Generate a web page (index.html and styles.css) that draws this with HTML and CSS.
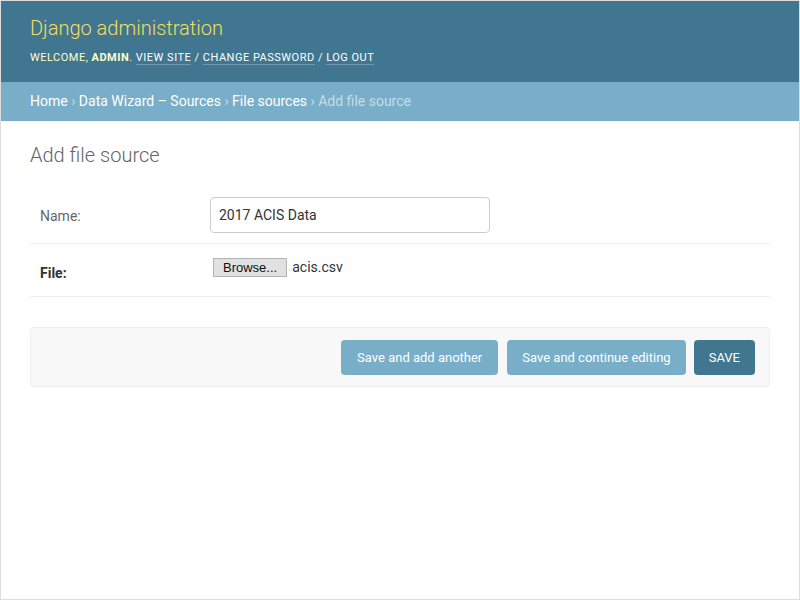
FILE: index.html
```html
<!DOCTYPE html>
<html lang="en">
<head>
<meta charset="utf-8">
<title>Add file source | Django site admin</title>
<link rel="stylesheet" href="styles.css">
</head>
<body>
<div class="page">
  <header class="header">
    <h1 class="site-name">Django administration</h1>
    <div class="user-tools">Welcome, <strong>admin</strong>. <a href="#">View site</a> / <a href="#">Change password</a> / <a href="#">Log out</a></div>
  </header>
  <nav class="breadcrumbs"><a href="#">Home</a> › <a href="#">Data Wizard – Sources</a> › <a href="#">File sources</a> › Add file source</nav>
  <main class="content">
    <h1 class="page-title">Add file source</h1>
    <form class="change-form">
      <div class="form-row">
        <label class="field-label">Name:</label>
        <input class="text-field" type="text" value="2017 ACIS Data">
      </div>
      <div class="form-row">
        <label class="field-label required">File:</label>
        <div class="file-widget"><span class="browse">Browse...</span><span class="file-name">acis.csv</span></div>
      </div>
      <div class="submit-row">
        <button type="button" class="btn btn-wide">Save and add another</button>
        <button type="button" class="btn">Save and continue editing</button>
        <button type="button" class="btn btn-default">SAVE</button>
      </div>
    </form>
  </main>
</div>
</body>
</html>
```

FILE: styles.css
```css
html, body {
  margin: 0;
  padding: 0;
  background: #fff;
}

body {
  font-family: Roboto, "Liberation Sans", Arial, sans-serif;
  color: #333;
}

.page {
  box-sizing: border-box;
  height: 600px;
  border: 1px solid #ddd;
  overflow: hidden;
}

.header {
  background: #417690;
  padding: 15px 29px 14px;
}

.site-name {
  margin: 0 0 8px;
  font-family: "Roboto Light", Roboto, "Liberation Sans", sans-serif;
  font-size: 20px;
  font-weight: 300;
  line-height: 24px;
  color: #f5dd5d;
}

.user-tools {
  font-size: 11px;
  line-height: 20px;
  letter-spacing: 0.5px;
  text-transform: uppercase;
  color: #ffc;
}

.user-tools strong {
  font-weight: 700;
}

.user-tools a {
  color: #fff;
  text-decoration: none;
  border-bottom: 1px solid rgba(255, 255, 255, 0.25);
}

.breadcrumbs {
  background: #79aec8;
  padding: 10px 29px;
  font-size: 14px;
  line-height: 19px;
  color: #c4dce8;
}

.breadcrumbs a {
  color: #fff;
  text-decoration: none;
}

.content {
  padding: 22px 29px 30px;
}

.page-title {
  margin: 0 0 20px;
  font-family: "Roboto Light", Roboto, "Liberation Sans", sans-serif;
  font-size: 20px;
  font-weight: 300;
  line-height: 24px;
  color: #666;
}

.form-row {
  display: flex;
  padding: 10px;
  border-bottom: 1px solid #eee;
}

.field-label {
  width: 170px;
  flex: none;
  padding-top: 9px;
  font-size: 14px;
  line-height: 20px;
  color: #666;
}

.field-label.required {
  color: #333;
  font-weight: 700;
}

.text-field {
  box-sizing: border-box;
  width: 280px;
  height: 36px;
  margin: 0;
  padding: 6px 8px;
  border: 1px solid #ccc;
  border-radius: 4px;
  font-family: Roboto, "Liberation Sans", Arial, sans-serif;
  font-size: 14px;
  color: #333;
  background: #fff;
}

.file-widget {
  display: flex;
  align-items: center;
  height: 32px;
  padding-left: 3px;
  align-self: flex-start;
}

.browse {
  box-sizing: border-box;
  height: 19px;
  padding: 0 9px;
  border: 1px solid #b4b4b4;
  background: #e1e1e1;
  font-family: "Liberation Sans", Arial, sans-serif;
  font-size: 13px;
  line-height: 17px;
  color: #111;
  margin-top: -6px;
}

.file-name {
  margin-left: 5px;
  font-size: 14px;
  color: #333;
  margin-top: -6px;
}

.submit-row {
  display: flex;
  justify-content: flex-end;
  gap: 8px;
  margin-top: 30px;
  padding: 12px 14px 11px;
  background: #f8f8f8;
  border: 1px solid #eee;
  border-radius: 4px;
}

.btn {
  height: 35px;
  padding: 0 15px;
  border: none;
  border-radius: 4px;
  background: #79aec8;
  color: #fff;
  font-family: Roboto, "Liberation Sans", Arial, sans-serif;
  font-size: 13px;
  line-height: 15px;
  cursor: pointer;
}

.btn-wide {
  padding: 0 16px;
  margin-right: 1px;
}

.btn-default {
  background: #417690;
}
```
